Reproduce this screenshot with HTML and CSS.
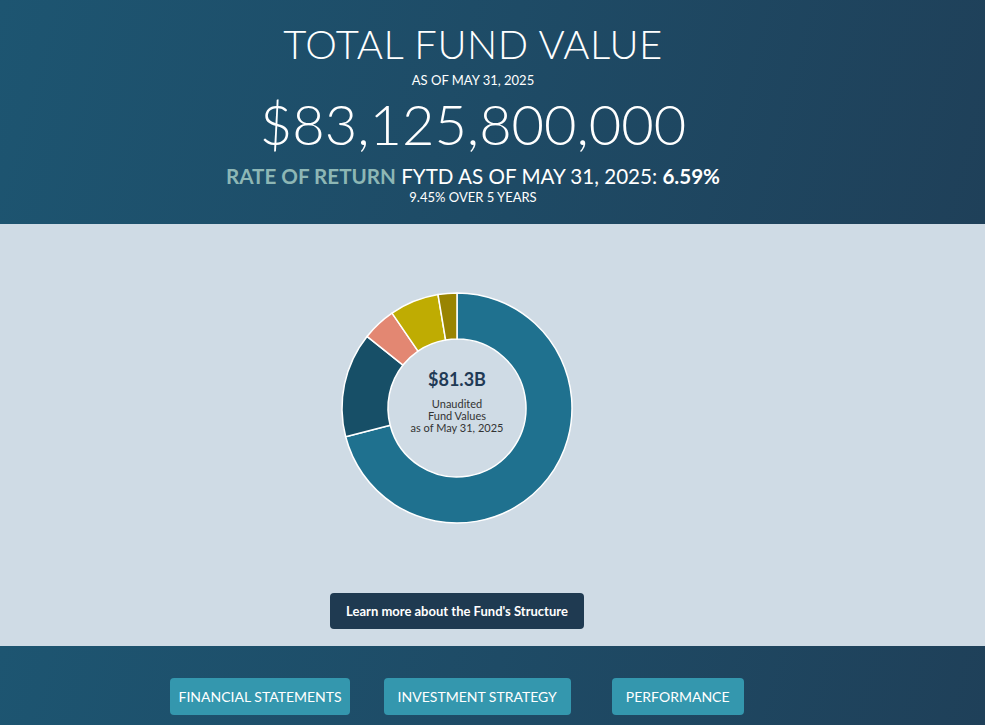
FILE: index.html
```html
<!DOCTYPE html>
<html lang="en">
<head>
    <meta charset="UTF-8">
    <meta name="viewport" content="width=device-width, initial-scale=1.0">
    <title>Total Fund Value</title>
    <link rel="stylesheet" href="styles.css">
</head>
<body>
    <header class="fund-header">
        <h1>TOTAL FUND VALUE</h1>
        <div class="as-of">AS OF MAY 31, 2025</div>
        <div class="fund-total">$83,125,800,000</div>
        <div class="rate">
            <span class="rate-label">RATE OF RETURN</span> FYTD AS OF MAY 31, 2025: <strong>6.59%</strong>
        </div>
        <div class="rate-sub">9.45% OVER 5 YEARS</div>
    </header>

    <section class="fund-chart">
        <div class="donut">
            <svg width="240" height="240" viewBox="0 0 240 240">
                <g stroke="#ffffff" stroke-width="1.5" stroke-linejoin="round">
                    <path fill="#1f718f" d="M120 5 A115 115 0 1 1 8.67 148.80 L53.20 137.28 A69 69 0 1 0 120 51 Z"/>
                    <path fill="#174f67" d="M8.67 148.80 A115 115 0 0 1 30.00 48.41 L66.00 77.05 A69 69 0 0 0 53.20 137.28 Z"/>
                    <path fill="#e38772" d="M30.00 48.41 A115 115 0 0 1 55.02 25.11 L81.01 63.07 A69 69 0 0 0 66.00 77.05 Z"/>
                    <path fill="#bfac02" d="M55.02 25.11 A115 115 0 0 1 101.02 6.58 L108.61 51.95 A69 69 0 0 0 81.01 63.07 Z"/>
                    <path fill="#998401" d="M101.02 6.58 A115 115 0 0 1 120 5 L120 51 A69 69 0 0 0 108.61 51.95 Z"/>
                </g>
            </svg>
            <div class="donut-center">
                <div class="donut-value">$81.3B</div>
                <div class="donut-note">Unaudited<br>Fund Values<br>as of May 31, 2025</div>
            </div>
        </div>
        <a class="structure-btn" href="#">Learn more about the Fund's Structure</a>
    </section>

    <nav class="fund-links">
        <a class="statements" href="#">FINANCIAL STATEMENTS</a>
        <a class="strategy" href="#">INVESTMENT STRATEGY</a>
        <a class="perf" href="#">PERFORMANCE</a>
    </nav>
</body>
</html>
```

FILE: styles.css
```css
body {
    font-family: Lato, "Open Sans", sans-serif;
    margin: 0;
    padding: 0;
    background-color: #cfdbe5;
    color: #ffffff;
}
.fund-header {
    height: 224px;
    box-sizing: border-box;
    padding: 20px 39px 0 0;
    text-align: center;
    background: linear-gradient(105deg, #1d5571 0%, #1e4b66 50%, #1f4059 100%);
}
.fund-header h1 {
    margin: 0;
    font-size: 40px;
    font-weight: 300;
    line-height: 48px;
    letter-spacing: 0.5px;
}
.as-of {
    font-size: 13px;
    line-height: 16px;
    margin-top: 4px;
}
.fund-total {
    font-size: 56px;
    font-weight: 300;
    line-height: 64px;
    margin-top: 4px;
}
.rate {
    font-size: 20.6px;
    line-height: 24px;
    margin-top: 8px;
}
.rate-label {
    color: #8db7b5;
    font-weight: 700;
}
.rate strong {
    font-weight: 700;
}
.rate-sub {
    font-size: 13px;
    line-height: 16px;
    margin-top: 1px;
}
.fund-chart {
    height: 422px;
    box-sizing: border-box;
    padding: 64px 71px 0 0;
    display: flex;
    flex-direction: column;
    align-items: center;
}
.donut {
    position: relative;
    width: 240px;
    height: 240px;
}
.donut svg {
    display: block;
}
.donut-center {
    position: absolute;
    left: 0;
    right: 0;
    top: 80px;
    text-align: center;
    color: #333333;
}
.donut-value {
    font-size: 18px;
    font-weight: 700;
    color: #1f3a55;
    line-height: 22px;
}
.donut-note {
    margin-top: 8px;
    font-size: 11px;
    line-height: 12px;
}
.structure-btn {
    margin-top: 65px;
    height: 36px;
    line-height: 36px;
    padding: 0 16px;
    border-radius: 4px;
    background-color: #1f3a51;
    color: #ffffff;
    font-size: 13px;
    font-weight: 700;
    text-decoration: none;
}
.fund-links {
    height: 79px;
    box-sizing: border-box;
    padding: 32px 71px 0 0;
    display: flex;
    justify-content: center;
    gap: 34px;
    background: linear-gradient(105deg, #1d5571 0%, #1e4b66 50%, #1f4059 100%);
}
.fund-links a {
    height: 37px;
    line-height: 37px;
    border-radius: 4px;
    background-color: #3497ae;
    color: #ffffff;
    font-size: 14px;
    text-decoration: none;
}
.fund-links .statements {
    padding: 0 8px;
}
.fund-links .strategy {
    padding: 0 14px;
}
.fund-links .perf {
    margin-left: 7px;
    padding: 0 14px;
}
```
